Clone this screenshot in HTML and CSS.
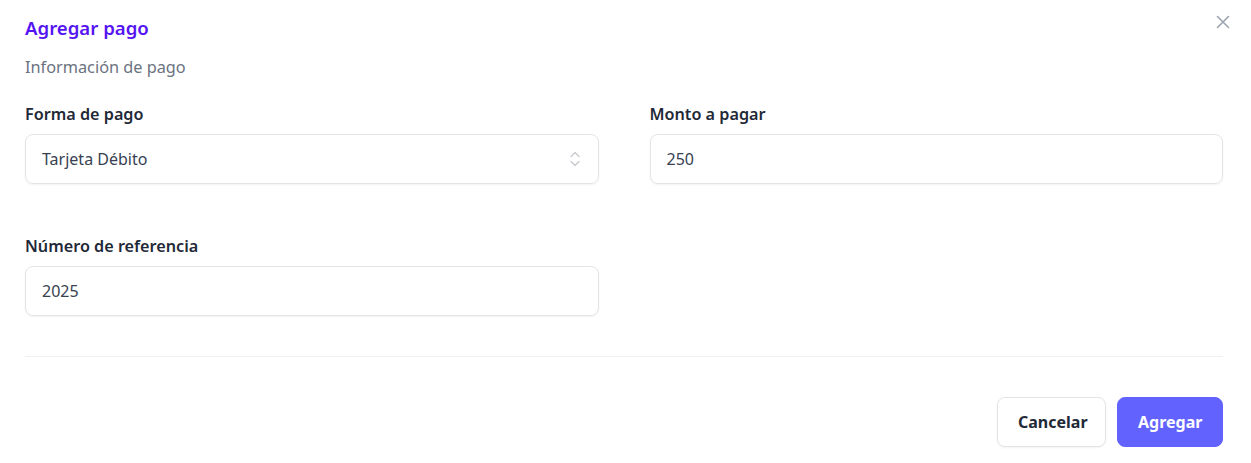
FILE: index.html
```html
<!DOCTYPE html>
<html lang="es">
<head>
<meta charset="utf-8">
<link rel="stylesheet" href="styles.css">
</head>
<body>
<div class="dialog">
  <button class="close" aria-label="Cerrar">
    <svg width="14" height="14" viewBox="0 0 14 14"><path d="M1.5 1.5L12.5 12.5M12.5 1.5L1.5 12.5" stroke="#9ca3af" stroke-width="1.6" stroke-linecap="round"/></svg>
  </button>
  <h2 class="title">Agregar pago</h2>
  <p class="subtitle">Información de pago</p>
  <div class="grid">
    <div class="field">
      <label class="label">Forma de pago</label>
      <div class="input select">
        <span>Tarjeta Débito</span>
        <svg class="chev" width="12" height="18" viewBox="0 0 12 18"><path d="M2 6.5L6 2.5L10 6.5M2 11.5L6 15.5L10 11.5" fill="none" stroke="#c7cad1" stroke-width="1.3" stroke-linecap="round" stroke-linejoin="round"/></svg>
      </div>
    </div>
    <div class="field">
      <label class="label">Monto a pagar</label>
      <div class="input">250</div>
    </div>
    <div class="field">
      <label class="label">Número de referencia</label>
      <div class="input">2025</div>
    </div>
  </div>
  <hr class="divider">
  <div class="actions">
    <button class="btn btn-secondary">Cancelar</button>
    <button class="btn btn-primary">Agregar</button>
  </div>
</div>
</body>
</html>
```
FILE: styles.css
```css
* { box-sizing: border-box; }
html, body { margin: 0; background: #fff; }
body { font-family: "Noto Sans", "Open Sans", sans-serif; color: #1f2937; }
.dialog { position: relative; padding: 14px 28px 16px 25px; }
.close { position: absolute; top: 15px; right: 21px; border: 0; background: none; padding: 0; width: 14px; height: 14px; display: block; }
.close svg { display: block; }
.title { margin: 0; font-size: 18.6px; line-height: 28px; font-weight: 600; color: #5514f2; }
.subtitle { margin: 13px 0 0; font-size: 16.3px; line-height: 24px; color: #6b7280; }
.grid { margin-top: 23px; display: grid; grid-template-columns: 1fr 1fr; column-gap: 51px; row-gap: 50px; }
.field { display: flex; flex-direction: column; gap: 8px; }
.label { font-size: 16.2px; line-height: 24px; font-weight: 600; color: #1f2937; }
.input { height: 50px; border: 1px solid #e2e4e8; border-radius: 8px; padding: 0 16px; display: flex; align-items: center; font-size: 16px; color: #374151; box-shadow: 0 1px 2px rgba(0,0,0,0.05); }
.select { justify-content: space-between; padding-right: 17px; }
.divider { margin: 40px 0 0; border: 0; border-top: 1px solid #f0f1f3; }
.actions { margin-top: 40px; display: flex; justify-content: flex-end; gap: 11px; }
.btn { height: 50px; border-radius: 8px; font-family: inherit; font-size: 16px; font-weight: 700; padding: 0 20px; }
.btn-secondary { width: 109px; background: #fff; border: 1px solid #e2e4e8; color: #1f2937; box-shadow: 0 1px 2px rgba(0,0,0,0.05); }
.btn-primary { width: 106px; background: #6262ff; border: 1px solid #6262ff; color: #fff; }
```
